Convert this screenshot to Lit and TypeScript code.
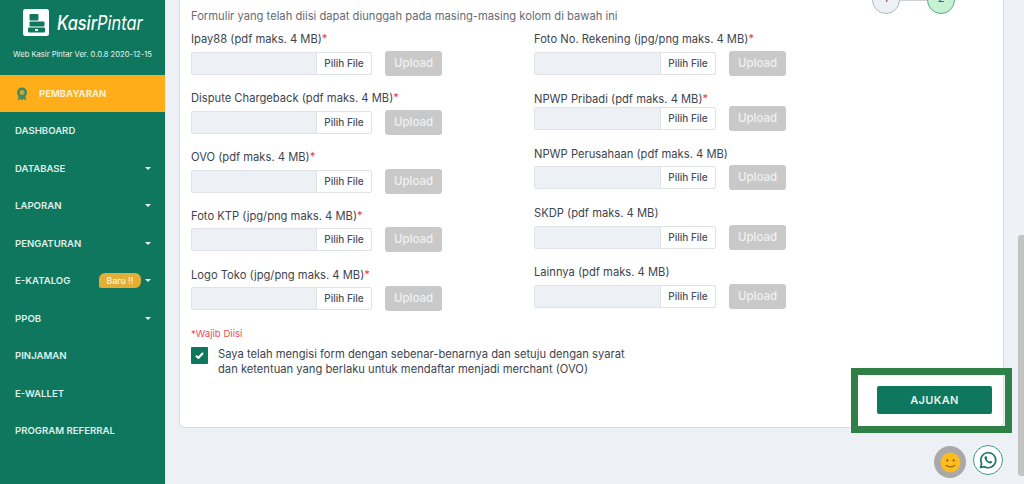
import { LitElement, html, css } from "lit";
import { customElement } from "lit/decorators.js";

const MENU: { label: string; caret?: boolean; badge?: string }[] = [
  { label: "DASHBOARD" },
  { label: "DATABASE", caret: true },
  { label: "LAPORAN", caret: true },
  { label: "PENGATURAN", caret: true },
  { label: "E-KATALOG", caret: true, badge: "Baru !!" },
  { label: "PPOB", caret: true },
  { label: "PINJAMAN" },
  { label: "E-WALLET" },
  { label: "PROGRAM REFERRAL" },
];

const LEFT = [
  { label: "Ipay88 (pdf maks. 4 MB)", req: true },
  { label: "Dispute Chargeback (pdf maks. 4 MB)", req: true },
  { label: "OVO (pdf maks. 4 MB)", req: true },
  { label: "Foto KTP (jpg/png maks. 4 MB)", req: true },
  { label: "Logo Toko (jpg/png maks. 4 MB)", req: true },
];
const RIGHT = [
  { label: "Foto No. Rekening (jpg/png maks. 4 MB)", req: true },
  { label: "NPWP Pribadi (pdf maks. 4 MB)", req: true },
  { label: "NPWP Perusahaan (pdf maks. 4 MB)", req: false },
  { label: "SKDP (pdf maks. 4 MB)", req: false },
  { label: "Lainnya (pdf maks. 4 MB)", req: false },
];

@customElement("app-root")
export class AppRoot extends LitElement {
  static styles = css`
    :host { display: block; width: 1024px; height: 484px; overflow: hidden; font-family: "Inter", "Open Sans", "Liberation Sans", sans-serif; color: #3d4450; }
    * { box-sizing: border-box; }
    .page { position: relative; display: flex; width: 1024px; height: 484px; background: #edf1f5; overflow: hidden; }

    .side { width: 165px; flex: none; background: #0f775d; color: #e4f0ec; display: flex; flex-direction: column; }
    .brand { height: 75px; display: flex; flex-direction: column; padding: 9px 0 0 0; }
    .logo { display: flex; align-items: center; gap: 8px; height: 27px; padding-left: 23px; }
    .logo svg { display: block; flex: none; }
    .logo-text { display: block; width: 85px; font-size: 20px; font-style: italic; font-weight: 500; color: #fff; white-space: nowrap; transform: scaleX(0.82); transform-origin: left center; }
    .logo-text b { font-weight: 400; }
    .ver { font-size: 7.6px; line-height: 10px; margin-top: 14px; color: #e8f3ef; white-space: nowrap; text-align: center; }
    .active { height: 37px; background: #ffae1a; display: flex; align-items: center; padding-left: 16px; gap: 11px; color: #fdf0cf; font-size: 9.5px; font-weight: 700; }
    .item { height: 37.5px; display: flex; align-items: center; padding: 0 15px; font-size: 9.6px; font-weight: 600; color: #dfeee9; white-space: nowrap; }
    .item .spacer { flex: 1; }
    .caret { width: 0; height: 0; border-left: 3.5px solid transparent; border-right: 3.5px solid transparent; border-top: 3.5px solid #e8f3ef; margin-right: -1px; }
    .badge { background: #e3ae37; color: #f9efd6; font-size: 8.6px; font-weight: 600; height: 15px; width: 42px; display: flex; align-items: center; justify-content: center; border-radius: 6px 6px 6px 2px; margin-right: 4px; }

    .main { flex: 1; min-width: 0; padding: 0 20px 0 14px; }
    .card { position: relative; height: 428px; background: #fff; border: 1px solid #d9dee3; border-top: none; border-radius: 0 0 6px 6px; padding: 9px 0 0 11px; }
    .intro { font-size: 11.2px; line-height: 14px; color: #666c75; white-space: nowrap; }
    .cols { display: flex; margin-top: 8.5px; }
    .col { width: 343px; flex: none; }
    .field { margin-bottom: 15.25px; }
    .col.r .field { margin-bottom: 16px; }
    .col.r .field:nth-child(4) { margin-bottom: 15px; }
    .lab { font-size: 11.2px; line-height: 14px; color: #3d4450; white-space: nowrap; }
    .req { color: #e8394a; }
    .row { display: flex; align-items: center; height: 25px; margin-top: 4.5px; }
    .field:first-child .row { margin-top: 5.5px; }
    .col.r .field:nth-child(2) .row { margin-top: 0; }
    .col.r .field:nth-child(3) .row { margin-top: 4px; }
    .col.r .field:nth-child(4) .row, .col.r .field:nth-child(5) .row { margin-top: 5px; }
    .file { height: 23px; width: 181px; flex: none; display: flex; border: 1px solid #dfe3e7; border-radius: 2px; background: #fff; }
    .col.r .file { width: 182px; }
    .in { width: 125px; flex: none; background: #edf1f5; border-right: 1px solid #dfe3e7; }
    .col.r .in { width: 126px; }
    .btn { flex: 1; display: flex; align-items: center; justify-content: center; padding-bottom: 1px; font-size: 10px; font-weight: 500; color: #4a505a; }
    .upload { margin-left: 13px; width: 57px; height: 25px; padding-bottom: 1px; border-radius: 3px; background: #c9c9c9; color: #f0f0f0; font-size: 11.5px; font-weight: 500; display: flex; align-items: center; justify-content: center; }
    .wajib { font-size: 9.6px; color: #ee4a58; line-height: 12px; margin-top: 1.5px; }
    .agree { display: flex; gap: 10px; margin-top: 7px; }
    .check { width: 17px; height: 17px; background: #0f775d; border-radius: 1px; flex: none; display: flex; align-items: center; justify-content: center; }
    .agree p { margin: 0; font-size: 11.2px; line-height: 15px; color: #3d4450; width: 420px; }

    .submit { position: absolute; left: 697px; top: 386px; width: 115px; height: 28px; background: #0f775d; color: #e6f2ee; border-radius: 2px; font-size: 11px; font-weight: 600; display: flex; align-items: center; justify-content: center; letter-spacing: 0.3px; }

    .step { position: absolute; top: -14px; width: 28px; height: 28px; border-radius: 50%; display: flex; align-items: flex-end; justify-content: center; font-size: 11px; color: #555; padding-bottom: 8px; }
    .step.one { left: 692px; background: #edf1f5; border: 1px solid #b4b8bc; }
    .step.two { left: 747px; background: #c6f1d3; border: 1px solid #57a98a; }
    .link { position: absolute; left: 720px; top: -1px; width: 27px; height: 2px; background: #cfd3d6; }

    .mark { position: absolute; left: 851px; top: 368px; width: 161px; height: 65px; border: 7px solid #2f8047; pointer-events: none; }
    .smile { position: absolute; left: 934px; top: 446px; width: 32px; height: 32px; border-radius: 50%; background: #a9a9a9; display: flex; align-items: center; justify-content: center; }
    .wa { position: absolute; left: 973px; top: 445px; width: 30px; height: 30px; border-radius: 50%; background: #fff; border: 1px solid #3f9a82; display: flex; align-items: center; justify-content: center; }
    .thumb { position: absolute; left: 1018px; top: 235px; width: 6px; height: 241px; border-radius: 3px 0 0 3px; background: #c4c4c4; }
  `;

  private field(f: { label: string; req: boolean }) {
    return html`<div class="field">
      <div class="lab">${f.label}${f.req ? html`<span class="req">*</span>` : ""}</div>
      <div class="row">
        <div class="file"><div class="in"></div><div class="btn">Pilih File</div></div>
        <div class="upload">Upload</div>
      </div>
    </div>`;
  }

  render() {
    return html`<div class="page">
      <aside class="side">
        <div class="brand">
          <div class="logo">
            <svg width="26" height="27" viewBox="0 0 26 27">
              <rect width="26" height="27" rx="2.5" fill="#fff"/>
              <rect x="6.5" y="5" width="9" height="6.5" rx="1" fill="#0f775d"/>
              <rect x="6.5" y="12.5" width="15" height="5" rx="1" fill="#0f775d"/>
              <rect x="5" y="18.5" width="17" height="5" rx="1" fill="#0f775d"/>
              <rect x="12" y="20" width="3" height="2" fill="#fff"/>
            </svg>
            <span class="logo-text">Kasir<b>Pintar</b></span>
          </div>
          <div class="ver">Web Kasir Pintar Ver. 0.0.8 2020-12-15</div>
        </div>
        <div class="active">
          <svg width="12" height="14" viewBox="0 0 12 14">
            <path d="M3 8 1.5 13.5 4.5 12 6 13.5 7.5 12 10.5 13.5 9 8Z" fill="#4d8a5c"/>
            <circle cx="6" cy="5.5" r="5" fill="#3f8a63"/>
            <circle cx="6" cy="5.5" r="2.5" fill="#c9a63a"/>
          </svg>
          PEMBAYARAN
        </div>
        ${MENU.map(
          (m) => html`<div class="item">
            ${m.label}<span class="spacer"></span>
            ${m.badge ? html`<span class="badge">${m.badge}</span>` : ""}
            ${m.caret ? html`<span class="caret"></span>` : ""}
          </div>`
        )}
      </aside>
      <main class="main">
        <section class="card">
          <span class="step one">1</span><span class="link"></span><span class="step two">2</span>
          <div class="intro">Formulir yang telah diisi dapat diunggah pada masing-masing kolom di bawah ini</div>
          <div class="cols">
            <div class="col">${LEFT.map((f) => this.field(f))}</div>
            <div class="col r">${RIGHT.map((f) => this.field(f))}</div>
          </div>
          <div class="wajib">*Wajib Diisi</div>
          <div class="agree">
            <span class="check">
              <svg width="9" height="7" viewBox="0 0 10 8"><path d="M1 4.2 3.7 6.8 9 1.2" fill="none" stroke="#fff" stroke-width="2.4"/></svg>
            </span>
            <p>Saya telah mengisi form dengan sebenar-benarnya dan setuju dengan syarat dan ketentuan yang berlaku untuk mendaftar menjadi merchant (OVO)</p>
          </div>
          <div class="submit">AJUKAN</div>
        </section>
      </main>
      <div class="mark"></div>
      <div class="smile">
        <svg width="21" height="21" viewBox="0 0 20 20">
          <circle cx="10" cy="10" r="9.5" fill="#fdbc1c"/>
          <circle cx="7" cy="8" r="1" fill="#7a5a10"/><circle cx="13" cy="8" r="1" fill="#7a5a10"/>
          <path d="M5.5 12.5Q10 16 14.5 12.5" fill="none" stroke="#7a5a10" stroke-width="1"/>
        </svg>
      </div>
      <div class="wa">
        <svg width="20" height="20" viewBox="0 0 24 24">
          <path d="M3 21l1.3-4.7A9 9 0 1 1 7.8 20Z" fill="none" stroke="#1f7a63" stroke-width="2" stroke-linejoin="round"/>
          <path d="M8.5 7.5c-1 1-1 2.8.6 5 1.7 2.3 3.9 3.700 5.600 3.700 1.300 0 2.400-1 2.300-2.100l-2.300-1.200-1 1.100c-1-.3-2.700-1.800-3.300-3.200l.8-1-1-2.400Z" fill="#1f7a63"/>
        </svg>
      </div>
      <div class="thumb"></div>
    </div>`;
  }
}
